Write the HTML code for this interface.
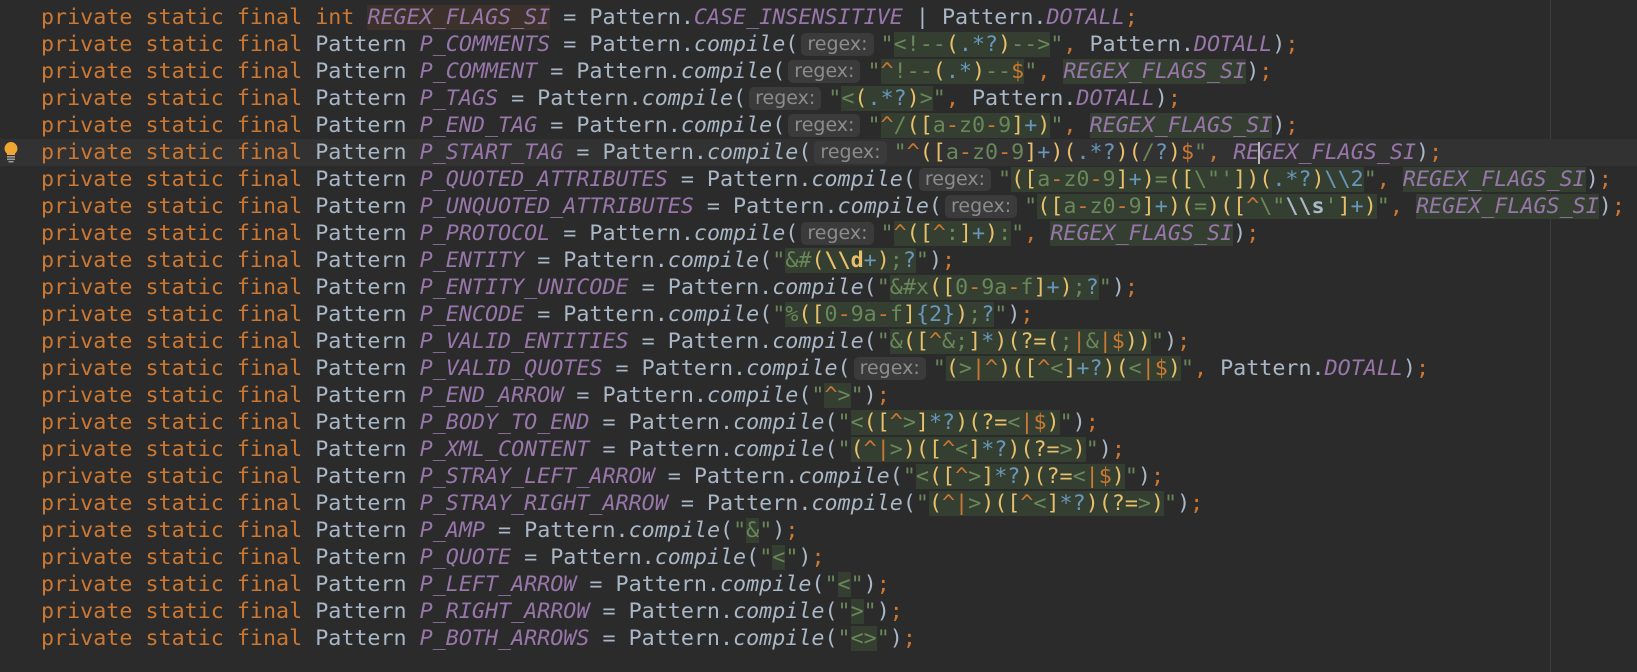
<!DOCTYPE html>
<html><head><meta charset="utf-8"><style>
html,body{margin:0;padding:0;background:#2b2b2b;width:1637px;height:672px;overflow:hidden}
.ed{position:absolute;left:0;top:4px;width:1637px;font-family:"DejaVu Sans Mono","Liberation Mono",monospace;font-size:21.7px;line-height:27px;color:#a9b7c6}
.l{height:27px;padding-left:41px;position:relative;white-space:pre}
.cur{background:#323232}
.k{color:#cc7832}
.f{color:#9876aa;font-style:italic}
.m{font-style:italic}
.s{color:#6a8759}
.p{color:#e8bf6a}
.q{color:#6897bb}
.o{color:#cc7832}
.w{color:#a9b7c6;font-weight:bold}
.y{color:#e8bf6a;font-weight:bold}
.g{background:#343f31}
.br{background:#3c322b}
.h{display:inline-block;background:#3b3b3b;color:#8c8c8c;font-family:"DejaVu Sans","Liberation Sans",sans-serif;font-size:19px;line-height:23px;height:23px;border-radius:5px;padding:0 6px;margin:0 7px 0 3px;vertical-align:top;margin-top:2px}
.margin{position:absolute;left:1550px;top:0;width:1px;height:672px;background:#3d3d3d}
.bulb{position:absolute;left:3px;top:141px}
.caret{display:inline-block;width:2px;height:22px;background:#bbbbbb;vertical-align:top;margin-top:3px;margin-left:-1px;margin-right:-1px}
</style></head><body>
<div class="margin"></div>
<div class="ed"><div class="l"><span class="k">private static final int </span><span class="f br">REGEX_FLAGS_SI</span> = Pattern.<span class="f">CASE_INSENSITIVE</span> | Pattern.<span class="f">DOTALL</span><span class="k">;</span></div><div class="l"><span class="k">private static final </span>Pattern <span class="f">P_COMMENTS</span> = Pattern.<span class="m">compile</span>(<span class="h">regex:</span><span class="s">"</span><span class="g"><span class="s">&lt;!--</span><span class="p">(</span><span class="q">.*?</span><span class="p">)</span><span class="s">--&gt;</span></span><span class="s">"</span><span class="k">, </span>Pattern.<span class="f">DOTALL</span>)<span class="k">;</span></div><div class="l"><span class="k">private static final </span>Pattern <span class="f">P_COMMENT</span> = Pattern.<span class="m">compile</span>(<span class="h">regex:</span><span class="s">"</span><span class="g"><span class="o">^</span><span class="s">!--</span><span class="p">(</span><span class="q">.*</span><span class="p">)</span><span class="s">--</span><span class="o">$</span></span><span class="s">"</span><span class="k">, </span><span class="g f">REGEX_FLAGS_SI</span>)<span class="k">;</span></div><div class="l"><span class="k">private static final </span>Pattern <span class="f">P_TAGS</span> = Pattern.<span class="m">compile</span>(<span class="h">regex:</span><span class="s">"</span><span class="g"><span class="s">&lt;</span><span class="p">(</span><span class="q">.*?</span><span class="p">)</span><span class="s">&gt;</span></span><span class="s">"</span><span class="k">, </span>Pattern.<span class="f">DOTALL</span>)<span class="k">;</span></div><div class="l"><span class="k">private static final </span>Pattern <span class="f">P_END_TAG</span> = Pattern.<span class="m">compile</span>(<span class="h">regex:</span><span class="s">"</span><span class="g"><span class="o">^</span><span class="s">/</span><span class="p">([</span><span class="s">a</span><span class="o">-</span><span class="s">z0</span><span class="o">-</span><span class="s">9</span><span class="p">]</span><span class="q">+</span><span class="p">)</span></span><span class="s">"</span><span class="k">, </span><span class="g f">REGEX_FLAGS_SI</span>)<span class="k">;</span></div><div class="l cur"><span class="k">private static final </span>Pattern <span class="f">P_START_TAG</span> = Pattern.<span class="m">compile</span>(<span class="h">regex:</span><span class="s">"</span><span class="o">^</span><span class="p">([</span><span class="s">a</span><span class="o">-</span><span class="s">z0</span><span class="o">-</span><span class="s">9</span><span class="p">]</span><span class="q">+</span><span class="p">)(</span><span class="q">.*?</span><span class="p">)(</span><span class="s">/</span><span class="q">?</span><span class="p">)</span><span class="o">$</span><span class="s">"</span><span class="k">, </span><span class="f">RE<span class="caret"></span>GEX_FLAGS_SI</span>)<span class="k">;</span></div><div class="l"><span class="k">private static final </span>Pattern <span class="f">P_QUOTED_ATTRIBUTES</span> = Pattern.<span class="m">compile</span>(<span class="h">regex:</span><span class="s">"</span><span class="g"><span class="p">([</span><span class="s">a</span><span class="o">-</span><span class="s">z0</span><span class="o">-</span><span class="s">9</span><span class="p">]</span><span class="q">+</span><span class="p">)</span><span class="s">=</span><span class="p">([</span><span class="s">\"'</span><span class="p">])(</span><span class="q">.*?</span><span class="p">)</span><span class="q">\\2</span></span><span class="s">"</span><span class="k">, </span><span class="g f">REGEX_FLAGS_SI</span>)<span class="k">;</span></div><div class="l"><span class="k">private static final </span>Pattern <span class="f">P_UNQUOTED_ATTRIBUTES</span> = Pattern.<span class="m">compile</span>(<span class="h">regex:</span><span class="s">"</span><span class="g"><span class="p">([</span><span class="s">a</span><span class="o">-</span><span class="s">z0</span><span class="o">-</span><span class="s">9</span><span class="p">]</span><span class="q">+</span><span class="p">)(</span><span class="s">=</span><span class="p">)([</span><span class="o">^</span><span class="s">\"</span><span class="w">\\s</span><span class="s">'</span><span class="p">]</span><span class="q">+</span><span class="p">)</span></span><span class="s">"</span><span class="k">, </span><span class="g f">REGEX_FLAGS_SI</span>)<span class="k">;</span></div><div class="l"><span class="k">private static final </span>Pattern <span class="f">P_PROTOCOL</span> = Pattern.<span class="m">compile</span>(<span class="h">regex:</span><span class="s">"</span><span class="g"><span class="o">^</span><span class="p">([</span><span class="o">^</span><span class="s">:</span><span class="p">]</span><span class="q">+</span><span class="p">)</span><span class="s">:</span></span><span class="s">"</span><span class="k">, </span><span class="g f">REGEX_FLAGS_SI</span>)<span class="k">;</span></div><div class="l"><span class="k">private static final </span>Pattern <span class="f">P_ENTITY</span> = Pattern.<span class="m">compile</span>(<span class="s">"</span><span class="g"><span class="s">&amp;#</span><span class="p">(</span><span class="y">\\d</span><span class="q">+</span><span class="p">)</span><span class="s">;</span><span class="q">?</span></span><span class="s">"</span>)<span class="k">;</span></div><div class="l"><span class="k">private static final </span>Pattern <span class="f">P_ENTITY_UNICODE</span> = Pattern.<span class="m">compile</span>(<span class="s">"</span><span class="g"><span class="s">&amp;#x</span><span class="p">([</span><span class="s">0</span><span class="o">-</span><span class="s">9a</span><span class="o">-</span><span class="s">f</span><span class="p">]</span><span class="q">+</span><span class="p">)</span><span class="s">;</span><span class="q">?</span></span><span class="s">"</span>)<span class="k">;</span></div><div class="l"><span class="k">private static final </span>Pattern <span class="f">P_ENCODE</span> = Pattern.<span class="m">compile</span>(<span class="s">"</span><span class="g"><span class="s">%</span><span class="p">([</span><span class="s">0</span><span class="o">-</span><span class="s">9a</span><span class="o">-</span><span class="s">f</span><span class="p">]</span><span class="q">{2}</span><span class="p">)</span><span class="s">;</span><span class="q">?</span></span><span class="s">"</span>)<span class="k">;</span></div><div class="l"><span class="k">private static final </span>Pattern <span class="f">P_VALID_ENTITIES</span> = Pattern.<span class="m">compile</span>(<span class="s">"</span><span class="g"><span class="s">&amp;</span><span class="p">([</span><span class="o">^</span><span class="s">&amp;;</span><span class="p">]</span><span class="q">*</span><span class="p">)(?=(</span><span class="s">;</span><span class="o">|</span><span class="s">&amp;</span><span class="o">|$</span><span class="p">))</span></span><span class="s">"</span>)<span class="k">;</span></div><div class="l"><span class="k">private static final </span>Pattern <span class="f">P_VALID_QUOTES</span> = Pattern.<span class="m">compile</span>(<span class="h">regex:</span><span class="s">"</span><span class="g"><span class="p">(</span><span class="s">&gt;</span><span class="o">|^</span><span class="p">)([</span><span class="o">^</span><span class="s">&lt;</span><span class="p">]</span><span class="q">+?</span><span class="p">)(</span><span class="s">&lt;</span><span class="o">|$</span><span class="p">)</span></span><span class="s">"</span><span class="k">, </span>Pattern.<span class="f">DOTALL</span>)<span class="k">;</span></div><div class="l"><span class="k">private static final </span>Pattern <span class="f">P_END_ARROW</span> = Pattern.<span class="m">compile</span>(<span class="s">"</span><span class="g"><span class="o">^</span><span class="s">&gt;</span></span><span class="s">"</span>)<span class="k">;</span></div><div class="l"><span class="k">private static final </span>Pattern <span class="f">P_BODY_TO_END</span> = Pattern.<span class="m">compile</span>(<span class="s">"</span><span class="g"><span class="s">&lt;</span><span class="p">([</span><span class="o">^</span><span class="s">&gt;</span><span class="p">]</span><span class="q">*?</span><span class="p">)(?=</span><span class="s">&lt;</span><span class="o">|$</span><span class="p">)</span></span><span class="s">"</span>)<span class="k">;</span></div><div class="l"><span class="k">private static final </span>Pattern <span class="f">P_XML_CONTENT</span> = Pattern.<span class="m">compile</span>(<span class="s">"</span><span class="g"><span class="p">(</span><span class="o">^|</span><span class="s">&gt;</span><span class="p">)([</span><span class="o">^</span><span class="s">&lt;</span><span class="p">]</span><span class="q">*?</span><span class="p">)(?=</span><span class="s">&gt;</span><span class="p">)</span></span><span class="s">"</span>)<span class="k">;</span></div><div class="l"><span class="k">private static final </span>Pattern <span class="f">P_STRAY_LEFT_ARROW</span> = Pattern.<span class="m">compile</span>(<span class="s">"</span><span class="g"><span class="s">&lt;</span><span class="p">([</span><span class="o">^</span><span class="s">&gt;</span><span class="p">]</span><span class="q">*?</span><span class="p">)(?=</span><span class="s">&lt;</span><span class="o">|$</span><span class="p">)</span></span><span class="s">"</span>)<span class="k">;</span></div><div class="l"><span class="k">private static final </span>Pattern <span class="f">P_STRAY_RIGHT_ARROW</span> = Pattern.<span class="m">compile</span>(<span class="s">"</span><span class="g"><span class="p">(</span><span class="o">^|</span><span class="s">&gt;</span><span class="p">)([</span><span class="o">^</span><span class="s">&lt;</span><span class="p">]</span><span class="q">*?</span><span class="p">)(?=</span><span class="s">&gt;</span><span class="p">)</span></span><span class="s">"</span>)<span class="k">;</span></div><div class="l"><span class="k">private static final </span>Pattern <span class="f">P_AMP</span> = Pattern.<span class="m">compile</span>(<span class="s">"</span><span class="g s">&amp;</span><span class="s">"</span>)<span class="k">;</span></div><div class="l"><span class="k">private static final </span>Pattern <span class="f">P_QUOTE</span> = Pattern.<span class="m">compile</span>(<span class="s">"</span><span class="g s">&lt;</span><span class="s">"</span>)<span class="k">;</span></div><div class="l"><span class="k">private static final </span>Pattern <span class="f">P_LEFT_ARROW</span> = Pattern.<span class="m">compile</span>(<span class="s">"</span><span class="g s">&lt;</span><span class="s">"</span>)<span class="k">;</span></div><div class="l"><span class="k">private static final </span>Pattern <span class="f">P_RIGHT_ARROW</span> = Pattern.<span class="m">compile</span>(<span class="s">"</span><span class="g s">&gt;</span><span class="s">"</span>)<span class="k">;</span></div><div class="l"><span class="k">private static final </span>Pattern <span class="f">P_BOTH_ARROWS</span> = Pattern.<span class="m">compile</span>(<span class="s">"</span><span class="g s">&lt;&gt;</span><span class="s">"</span>)<span class="k">;</span></div></div>
<svg class="bulb" width="16" height="22" viewBox="0 0 16 22">
<path d="M8 1a6.5 6.5 0 0 0-4 11.6V14h8v-1.4A6.5 6.5 0 0 0 8 1z" fill="#f0a732"/>
<rect x="4" y="15" width="8" height="1.6" fill="#9a9a9a"/>
<rect x="4" y="17.5" width="8" height="1.6" fill="#9a9a9a"/>
<rect x="5.5" y="20" width="5" height="1.5" fill="#9a9a9a"/>
</svg>
</body></html>
